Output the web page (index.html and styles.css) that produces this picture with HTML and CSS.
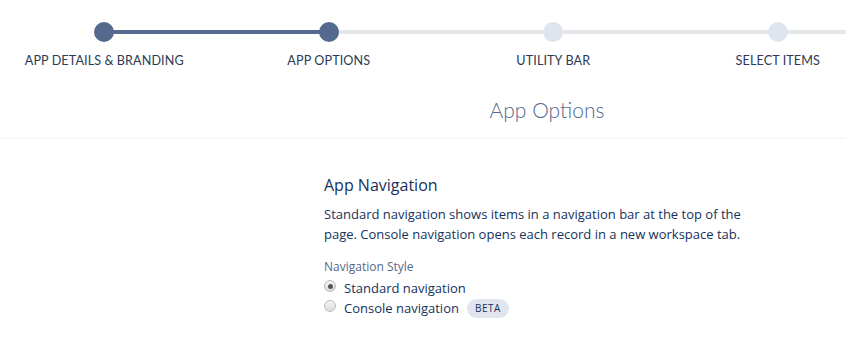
FILE: index.html
```html
<!DOCTYPE html>
<html>
<head>
<meta charset="utf-8">
<link rel="stylesheet" href="styles.css">
</head>
<body>
<div class="progress">
  <div class="track">
    <div class="track-done"></div>
  </div>
  <div class="step done"><span class="dot"></span><span class="label">APP DETAILS &amp; BRANDING</span></div>
  <div class="step done"><span class="dot"></span><span class="label">APP OPTIONS</span></div>
  <div class="step"><span class="dot"></span><span class="label">UTILITY BAR</span></div>
  <div class="step"><span class="dot"></span><span class="label">SELECT ITEMS</span></div>
</div>
<div class="layout">
  <div class="side"></div>
  <div class="main">
    <h1 class="page-title">App Options</h1>
  </div>
</div>
<div class="divider"></div>
<div class="layout">
  <div class="side"></div>
  <div class="main">
    <section class="section">
      <h2 class="section-title">App Navigation</h2>
      <p class="desc">Standard navigation shows items in a navigation bar at the top of the page. Console navigation opens each record in a new workspace tab.</p>
      <div class="field-label">Navigation Style</div>
      <label class="radio"><span class="radio-btn checked"></span><span class="radio-text">Standard navigation</span></label>
      <label class="radio"><span class="radio-btn"></span><span class="radio-text">Console navigation</span><span class="badge">BETA</span></label>
    </section>
  </div>
</div>
</body>
</html>
```

FILE: styles.css
```css
* { box-sizing: border-box; }
html, body { margin: 0; padding: 0; background: #fff; }
body {
  font-family: "Open Sans", "Noto Sans", sans-serif;
  color: #16325c;
  width: 846px;
  height: 351px;
  overflow: hidden;
}
.progress {
  position: relative;
  display: flex;
  margin-left: -8px;
  padding-top: 22px;
  height: 82px;
  overflow: hidden;
}
.track {
  position: absolute;
  left: 112px;
  right: 0;
  top: 30px;
  height: 4px;
  background: #e4e6ea;
}
.track-done {
  width: 225px;
  height: 4px;
  background: #54698d;
}
.step {
  position: relative;
  flex: 0 0 224.5px;
  display: flex;
  flex-direction: column;
  align-items: center;
}
.dot {
  width: 20px;
  height: 20px;
  border-radius: 50%;
  background: #dfe5ee;
}
.step.done .dot { background: #54698d; }
.label {
  margin-top: 10px;
  font-family: "Lato", "Open Sans", sans-serif;
  font-size: 12.6px;
  line-height: 18px;
  white-space: nowrap;
  color: #2b3a55;
  letter-spacing: 0.1px;
}
.layout {
  display: flex;
}
.side { flex: 0 0 248px; }
.main { flex: 1; }
.page-title {
  margin: 0;
  text-align: center;
  font-family: "Lato", "Open Sans", sans-serif;
  font-weight: 300;
  font-size: 21px;
  line-height: 30px;
  color: #54698d;
  padding-top: 13px;
  height: 55px;
}
.divider {
  height: 2px;
  background: #f6f7f9;
}
.section {
  padding-left: 76px;
  padding-top: 35px;
}
.section-title {
  margin: 0;
  font-size: 16px;
  font-weight: 400;
  line-height: 22px;
  color: #16325c;
}
.desc {
  margin: 8px 0 0;
  font-size: 13px;
  line-height: 20px;
  width: 430px;
  color: #16325c;
}
.field-label {
  margin-top: 14px;
  font-size: 12px;
  line-height: 18px;
  color: #54698d;
}
.radio {
  display: flex;
  align-items: center;
  height: 20px;
  margin-top: 2px;
}
.radio + .radio { margin-top: 0; }
.radio-btn {
  width: 12px;
  height: 12px;
  border-radius: 50%;
  border: 1px solid #b8bcc3;
  background: linear-gradient(#f4f4f4, #dcdcdc);
  margin-right: 8px;
  position: relative;
  top: -2px;
}
.radio-btn.checked::after {
  content: "";
  position: absolute;
  left: 2.5px;
  top: 2.5px;
  width: 5px;
  height: 5px;
  border-radius: 50%;
  background: #555;
}
.radio-text {
  font-size: 13px;
  color: #16325c;
}
.badge {
  margin-left: 8px;
  display: inline-block;
  padding: 0 8px;
  height: 19px;
  line-height: 19px;
  border-radius: 10px;
  background: #e0e5ee;
  font-size: 10px;
  letter-spacing: 0.5px;
  color: #16325c;
}
```
